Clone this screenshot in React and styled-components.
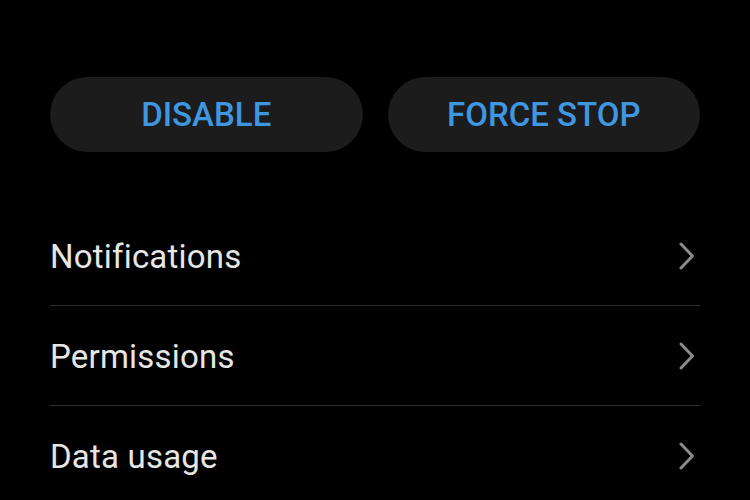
import React from 'react'
import styled, { createGlobalStyle } from 'styled-components'

const GlobalStyle = createGlobalStyle`
  html, body {
    margin: 0;
    padding: 0;
    background: #000;
  }
  body {
    font-family: Roboto, "Noto Sans", sans-serif;
    -webkit-font-smoothing: antialiased;
  }
`

const Chevron = () => (
  <svg width='16' height='28' viewBox='0 0 16 28' fill='none'>
    <path d='M2 2 L13.5 14 L2 26' stroke='#8a8a8a' strokeWidth='3' strokeLinecap='round' strokeLinejoin='round' />
  </svg>
)

const rows = ['Notifications', 'Permissions', 'Data usage']

function App () {
  return (
    <Screen>
      <GlobalStyle />
      <ButtonRow>
        <ActionButton>DISABLE</ActionButton>
        <ActionButton>FORCE STOP</ActionButton>
      </ButtonRow>

      <List>
        {rows.map(label => (
          <Row key={label}>
            <Label>{label}</Label>
            <ChevronWrap>
              <Chevron />
            </ChevronWrap>
          </Row>
        ))}
      </List>
    </Screen>
  )
}

export default App

const Screen = styled.div`
  width: 750px;
  height: 500px;
  overflow: hidden;
  background: #000;
  padding: 77px 50px 0;
  box-sizing: border-box;
`

const ButtonRow = styled.div`
  display: grid;
  grid-template-columns: 1fr 1fr;
  gap: 25px;
`

const ActionButton = styled.button`
  height: 75px;
  border: none;
  border-radius: 38px;
  background: #1c1c1c;
  color: #3f97e2;
  font-family: Roboto, sans-serif;
  font-weight: 500;
  font-size: 33px;
  padding: 0;
  display: grid;
  place-items: center;
`

const List = styled.div`
  margin-top: 54px;
  display: flex;
  flex-direction: column;
`

const Row = styled.div`
  height: 99px;
  border-bottom: 1px solid #2e2e2e;
  display: flex;
  align-items: center;
  justify-content: space-between;
`

const Label = styled.span`
  color: #e6e6e6;
  font-size: 33px;
  letter-spacing: 0.2px;
  font-weight: 400;
  padding-top: 2px;
`

const ChevronWrap = styled.div`
  display: flex;
  margin-right: 5px;
`
